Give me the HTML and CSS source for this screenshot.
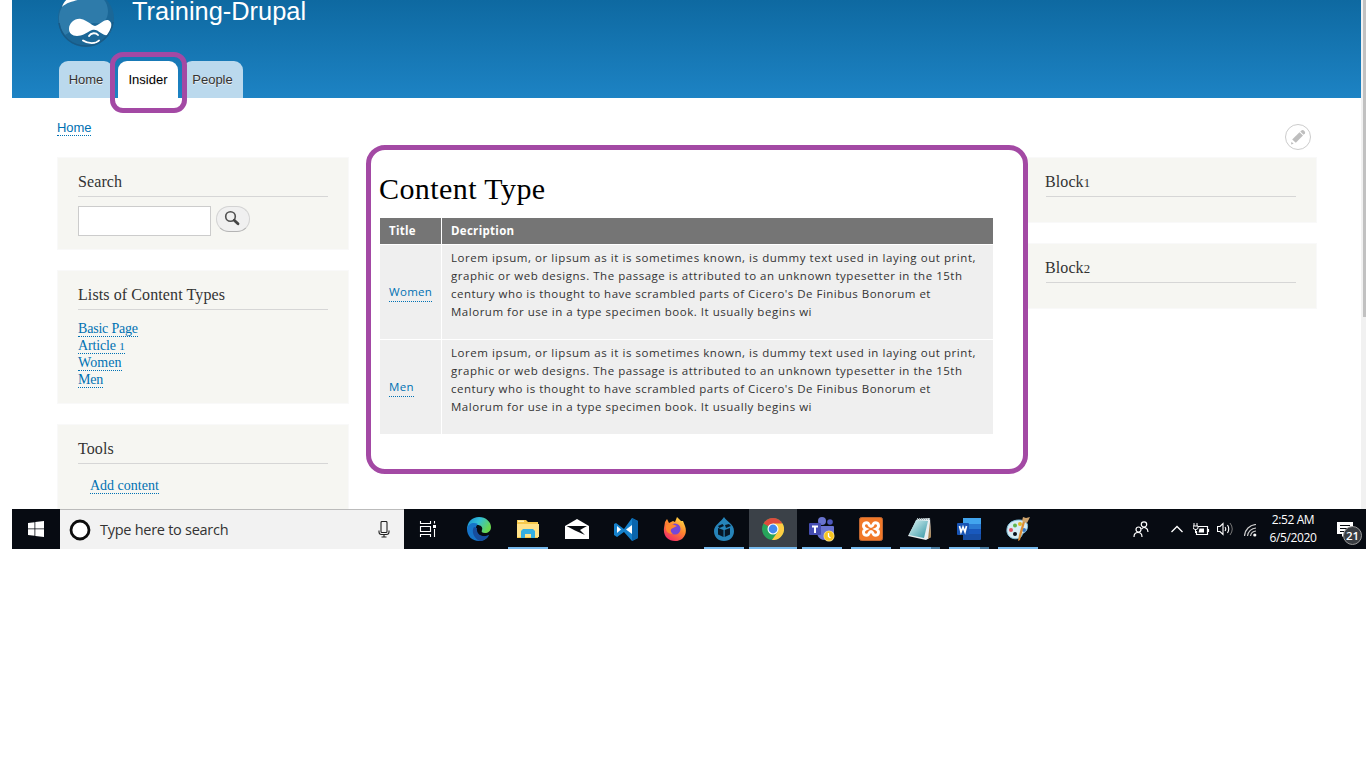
FILE: index.html
```html
<!DOCTYPE html>
<html lang="en">
<head>
<meta charset="utf-8">
<title>Content Type | Training-Drupal</title>
<link rel="stylesheet" href="styles.css">
</head>
<body>
<div class="screen">
  <div class="viewport">
    <div class="page">
      <header class="header">
        <div class="brand">
          <svg class="logo" viewBox="0 0 58 66" width="58" height="66">
            <path d="M27 0C31 7 38 9 45 15C53 21 57 29 57 37C57 53 45 66 29 66C13 66 1 53 1 37C1 28 6 20 13 16C20 11 25 7 27 0Z" fill="#1b6797"/>
            <path d="M20 12C35 11 50 13 51 30C51 42 43 43 37 42C26 42 14 51 8 54C2 46 0 37 4 28C8 21 13 17 20 12Z" fill="#2e7baa"/>
            <path d="M5 26C7 19 13 15 22 13L24 18C18 20 10 21 5 26Z" fill="#fff"/>
            <path d="M12 48C12 42 18 37 24 38C30 39 34 44 38 45C42 44 47 38 51 39C56 41 55 48 53 51C51 56 47 54 44 52C40 49 38 48 35 49C29 52 25 55 20 55C15 55 12 52 12 48Z" fill="#fff"/>
            <path d="M32 55C34 51.500 39 51.500 41 54M26 59.500C31 63 39 63 42 59.500" fill="none" stroke="#fff" stroke-width="1.900" stroke-linecap="round"/>
            <path d="M2 42C4 56 15 65 29 65C43 65 54 55 56 41" fill="none" stroke="#185a86" stroke-width="1.5"/>
          </svg>
          <div class="site-name">Training-Drupal</div>
        </div>
        <nav class="tabs">
          <a class="tab tab-home">Home</a>
          <a class="tab active">Insider<span class="mark mark-tab"></span></a>
          <a class="tab tab-people">People</a>
        </nav>
      </header>
      <div class="crumbs">
        <a class="link crumb">Home</a>
        <span class="edit"><svg width="26" height="26" viewBox="0 0 26 26"><circle cx="13" cy="13" r="12.5" fill="#fff" stroke="#ccc"/><g fill="#bebebe"><path d="M7.200 15.500L14.500 8.300L18 11.500L10.800 18.800Z"/><path d="M15.300 7.500L16.800 6.200Q18 5.600 19.400 7Q20.600 8.400 19.900 9.400L18.600 10.800Z"/><path d="M6 20.400L6.500 17.800L8.600 19.800Z"/></g></svg></span>
      </div>
      <div class="columns">
        <aside class="side">
          <section class="block search-block">
            <h2 class="bt">Search</h2>
            <div class="search-row">
              <input class="search-input" type="text" aria-label="Search">
              <button class="search-btn" aria-label="Search"><svg width="18" height="18" viewBox="0 0 18 18"><circle cx="6.500" cy="6.500" r="4.800" fill="none" stroke="#505050" stroke-width="1.600"/><path d="M10.200 10.200L14 13.800" stroke="#444" stroke-width="2.800" stroke-linecap="round"/></svg></button>
            </div>
          </section>
          <section class="block list-block">
            <h2 class="bt">Lists of Content Types</h2>
            <ul class="list">
              <li><a class="link w-basic">Basic Page</a></li>
              <li><a class="link w-article">Article <span class="old">1</span></a></li>
              <li><a class="link w-women">Women</a></li>
              <li><a class="link w-men">Men</a></li>
            </ul>
          </section>
          <section class="block tools-block">
            <h2 class="bt">Tools</h2>
            <div class="tools"><a class="link">Add content</a></div>
          </section>
        </aside>
        <main class="content">
          <span class="mark mark-main"></span>
          <h1 class="title">Content Type</h1>
          <table class="grid">
            <thead><tr><th class="c1">Title</th><th>Decription</th></tr></thead>
            <tbody>
              <tr><td><a class="link">Women</a></td><td class="desc"><div class="l1">Lorem ipsum, or lipsum as it is sometimes known, is dummy text used in laying out print,</div><div class="l2">graphic or web designs. The passage is attributed to an unknown typesetter in the 15th</div><div class="l3">century who is thought to have scrambled parts of Cicero's De Finibus Bonorum et</div><div class="l4">Malorum for use in a type specimen book. It usually begins wi</div></td></tr>
              <tr><td><a class="link">Men</a></td><td class="desc"><div class="l1">Lorem ipsum, or lipsum as it is sometimes known, is dummy text used in laying out print,</div><div class="l2">graphic or web designs. The passage is attributed to an unknown typesetter in the 15th</div><div class="l3">century who is thought to have scrambled parts of Cicero's De Finibus Bonorum et</div><div class="l4">Malorum for use in a type specimen book. It usually begins wi</div></td></tr>
            </tbody>
          </table>
        </main>
        <aside class="side right">
          <section class="block small-block"><h2 class="bt">Block<span class="old">1</span></h2></section>
          <section class="block small-block"><h2 class="bt">Block<span class="old">2</span></h2></section>
        </aside>
      </div>
    </div>
    <div class="scrollbar"><div class="thumb"></div></div>
  </div>
  <footer class="taskbar">
    <div class="start"><svg width="16" height="16" viewBox="0 0 16 16"><path fill="#fff" d="M0 2L6.500 1.200V7.400H0ZM7.300 1L16 0V7.400H7.300ZM0 8.300H6.500V14.700L0 13.900ZM7.300 8.300H16V16L7.300 14.900Z"/></svg></div>
    <div class="tsearch">
      <svg width="22" height="22" viewBox="0 0 22 22"><circle cx="11" cy="11" r="9" fill="#fff" stroke="#0c0c0c" stroke-width="2.800"/></svg>
      <span class="ttext">Type here to search</span>
      <svg class="mic" width="12" height="17" viewBox="0 0 12 17"><path d="M3 1.500Q3 .5 4 .5H8Q9 .5 9 1.500V10.500Q9 11.500 8 11.500H4Q3 11.500 3 10.500ZM1 9.500V11Q1 13.500 3.500 13.500H8.500Q11 13.500 11 11V9.500M6 13.500V16M3.500 16H8.500" fill="none" stroke="#222" stroke-width="1.100"/></svg>
    </div>
    <div class="taskview"><svg width="18" height="16" viewBox="0 0 18 16"><path d="M1.500 0V2.500H11.500V0M1.500 16V13.500H11.500V16M1.500 5.500H11.500V10.500H1.500ZM15.500 0V2.500M15.500 8V16" fill="none" stroke="#fff" stroke-width="1.100"/><path d="M14 4H17V7H14Z" fill="#fff"/></svg></div>
    <div class="apps">
      <div class="app"><svg width="24" height="24" viewBox="0 0 24 24"><defs><linearGradient id="eg" x1="0" y1="0" x2="1" y2=".45"><stop offset="0" stop-color="#168bd2"/><stop offset=".5" stop-color="#32bfd8"/><stop offset="1" stop-color="#68d751"/></linearGradient></defs><path d="M0 13C0 5 5 0 12 0C19 0 24 5 24 10C24 14 21 16 18 16C15 16 14 15 15 13C17 8 8 5 0 13Z" fill="url(#eg)"/><path d="M0 12C1 6 7 5 11 7C8 9 8 15 12 18C15 20 19 20 22 18C20 22 16 24 12 24C5 24 0 19 0 12Z" fill="#1674c8"/><path d="M7 10C4 14 7 22 13 24C17 24 20 21 22 18C16 21 9 18 10 11Z" fill="#174d9d"/></svg></div>
      <div class="app run"><svg width="22" height="20" viewBox="0 0 22 20"><path d="M0 1H9L11 3H21V19H0Z" fill="#f6c84b"/><path d="M0 5H22V18H0Z" fill="#ffe28a"/><path d="M1 1.500H7V3H1Z" fill="#fff0af"/><path d="M4 19V12L6 10H16L18 12V19H14V15H8V19Z" fill="#35aee2"/></svg></div>
      <div class="app"><svg width="24" height="20" viewBox="0 0 24 20"><path d="M0 7L12 0L24 7V20H0Z" fill="#fff"/><path d="M1.500 7H22L15 11L20 16L10 11.500Z" fill="#070b10"/></svg></div>
      <div class="app"><svg width="24" height="23" viewBox="0 0 24 23"><path d="M0 6L2 5L10 11L18 0L24 3V20L18 23L10 14L3 19L0 17Z" fill="#1681cb"/><path d="M3 8V15L7 11.500Z" fill="#fff"/><path d="M18 0L24 3V20L18 23Z" fill="#0a65ac"/><path d="M12 11.500L18 7V16Z" fill="#fff"/></svg></div>
      <div class="app"><svg width="24" height="24" viewBox="0 0 24 24"><defs><linearGradient id="fg" x1=".8" y1="0" x2=".2" y2="1"><stop offset="0" stop-color="#ffe047"/><stop offset=".45" stop-color="#ff852e"/><stop offset="1" stop-color="#f1246a"/></linearGradient></defs><path d="M2 5L4 2L6 6L10 4L12 5L14 0L18 4L20 4L22 9C25 17 20 24 12 24C5 24 0 19 1 11Z" fill="url(#fg)"/><circle cx="12" cy="12" r="5.500" fill="#7547d8"/><path d="M3 8L9 7L14 9L10 11C7 12 7 15 10 17C4 17 2 13 3 8Z" fill="#ff872e"/></svg></div>
      <div class="app run"><svg width="20" height="24" viewBox="0 0 20 24"><path d="M10 0C13 5 20 7 20 14C20 20 16 24 10 24C4 24 0 20 0 14C0 8 7 5 10 0Z" fill="#2684b9"/><path d="M4 11L9.500 13V20L4 17.500ZM10.700 13L16 11V17.500L10.700 20ZM4 9L8.500 7L10 9L5.500 11ZM11 8L15 7L17 9L12 11Z" fill="#071725"/></svg></div>
      <div class="app run current"><svg width="22" height="22" viewBox="0 0 22 22"><circle cx="11" cy="11" r="11" fill="#27a45b"/><path d="M11 11L1.500 5.500A11 11 0 0 1 20.500 5.500Z" fill="#df4b3d"/><path d="M11 5.500H20.500A11 11 0 0 1 10 22L15.800 13.800Z" fill="#fdcc43"/><circle cx="11" cy="11" r="5.500" fill="#fff"/><circle cx="11" cy="11" r="4.400" fill="#4389ee"/></svg></div>
      <div class="app run"><svg width="26" height="26" viewBox="0 0 26 26"><circle cx="13" cy="5" r="4" fill="#6973ce"/><circle cx="21" cy="6" r="2.800" fill="#4f59bd"/><path d="M8 10H24Q25 10 25 11V18Q22 24 16 24Q10 24 8 18Z" fill="#6a73d1"/><rect y="7" width="12" height="12" rx="1" fill="#454db2"/><path d="M3 9.500H9V11.500H7V17H5V11.500H3Z" fill="#fff"/><circle cx="20" cy="20" r="5.500" fill="#f9df86"/><circle cx="20" cy="20" r="4.700" fill="#f8c51f"/><path d="M19.500 17V20.500L21.500 22" stroke="#fff" stroke-width="1.300" fill="none"/></svg></div>
      <div class="app run"><svg width="24" height="24" viewBox="0 0 24 24"><rect x=".5" y=".5" width="23" height="23" rx="2" fill="#f17929" stroke="#bd6530"/><path d="M8 5.700C3.500 5.700 3.500 10.500 7 12C3.500 13.500 3.500 18.300 8 18.300C10.500 18.300 9.500 14.500 12 14.500C14.500 14.500 13.500 18.300 16 18.300C20.500 18.300 20.500 13.500 17 12C20.500 10.500 20.500 5.700 16 5.700C13.500 5.700 14.500 9.500 12 9.500C9.500 9.500 10.500 5.700 8 5.700Z" fill="none" stroke="#fff" stroke-width="2.900"/></svg></div>
      <div class="app run multi"><svg width="24" height="24" viewBox="0 0 24 24"><defs><linearGradient id="ng" x1="0" y1="0" x2="1" y2="1"><stop stop-color="#dff7f7"/><stop offset="1" stop-color="#3495a4"/></linearGradient></defs><path d="M9 2L22 1L23 20L18 23L0 19Z" fill="#e9eef0"/><path d="M22 5L23 20L20 22Z" fill="#a88251"/><path d="M8 3L20 4L16 21L1 18Z" fill="url(#ng)"/><path d="M9 2H22" stroke="#9eb0b5" stroke-width="2" stroke-dasharray="1 1"/></svg></div>
      <div class="app run multi"><svg width="24" height="22" viewBox="0 0 24 22"><path d="M6 0H23Q24 0 24 1V21Q24 22 23 22H6Z" fill="#174ea5"/><path d="M6 0H24V6H6Z" fill="#42a5ee"/><path d="M6 6H24V11H6Z" fill="#2b7bd3"/><path d="M6 11H24V16H6Z" fill="#1959bd"/><rect y="5" width="12" height="12" rx="1" fill="#1854b4"/><path d="M2.500 8L4 14L6 9L8 14L9.500 8" fill="none" stroke="#fff" stroke-width="1.700"/></svg></div>
      <div class="app run"><svg width="26" height="26" viewBox="0 0 26 26"><path d="M2 16C1 9 6 4 14 4C21 4 24 8 22 13C21 17 18 16 17 19C16 24 4 25 2 16Z" fill="#d7ecf5" stroke="#7ebdd8"/><circle cx="6" cy="14" r="2" fill="#df5360"/><circle cx="10" cy="9.500" r="2" fill="#60b34b"/><circle cx="15" cy="8" r="2" fill="#e4b82b"/><circle cx="10" cy="18" r="2" fill="#06101b"/><circle cx="19" cy="14" r="2" fill="#3a79c5"/><path d="M20 6L15 24L13 25L14 19L18 5Z" fill="#db8c35"/><path d="M17 5L18 1L21 2L25 1L22 7Z" fill="#cfa46d"/></svg></div>
    </div>
    <div class="tray">
      <svg class="people" width="16" height="17" viewBox="0 0 16 17"><g fill="none" stroke="#fff" stroke-width="1.200"><circle cx="5.500" cy="8.500" r="2.500"/><path d="M1 16C1 10 9 10 9 16"/><circle cx="11" cy="3.500" r="2.700"/><path d="M8.500 8C11 5 15 7 15 11"/></g></svg>
      <svg class="chev" width="12" height="8" viewBox="0 0 12 8"><path d="M.5 7L6 1.500L11.500 7" fill="none" stroke="#fff" stroke-width="1.300"/></svg>
      <svg class="battery" width="17" height="13" viewBox="0 0 17 13"><path d="M5 3.500H14.500V11.500H3.500V8M15.500 6V9" fill="none" stroke="#fff" stroke-width="1.200"/><path d="M6.500 5.500H11V9.500H5.500Z" fill="#fff"/><path d="M1 0V3M4 0V3M0 3H5V5Q5 6.500 2.500 6.500Q0 6.500 0 4ZM2.500 6V10" fill="none" stroke="#fff"/></svg>
      <svg class="volume" width="17" height="14" viewBox="0 0 17 14"><path d="M.5 4.500H3L6 1.500V12.500L3 9.500H.5Z M8 5Q9.500 7 8 9M10.500 3Q13 7 10.500 11" fill="none" stroke="#fff" stroke-width="1.100"/><path d="M13 1Q17.500 7 13 13" fill="none" stroke="#777"/></svg>
      <svg class="wifi" width="13" height="13" viewBox="0 0 13 13"><path d="M.5 12A12 12 0 0 1 12 .5M3.500 12A9 9 0 0 1 12 4M6.500 12A6 6 0 0 1 12 7" fill="none" stroke="#ccc" stroke-width="1.200"/><circle cx="10.800" cy="11" r="1.600" fill="#fff"/></svg>
      <div class="clock"><div class="time">2:52 AM</div><div class="date">6/5/2020</div></div>
      <div class="notif"><svg width="16" height="15" viewBox="0 0 16 15"><path d="M0 0H16V12H8L5 15V12H0Z" fill="#fff"/><path d="M3 3.500H13M3 6.500H13M3 9.500H10" stroke="#080c12"/></svg><span class="badge">21</span></div>
    </div>
  </footer>
</div>
</body>
</html>
```
FILE: styles.css
```css
* { box-sizing: border-box; }
body { margin: 0; width: 1366px; height: 768px; overflow: hidden; background: #fff; font-family: "Liberation Sans", sans-serif; color: #333; }
h1, h2, ul { margin: 0; padding: 0; font-weight: normal; list-style: none; }
svg { display: block; flex: none; }
.screen { padding-left: 12px; }
.viewport { display: flex; height: 509px; overflow: hidden; }
.page { width: 1349px; flex: none; }
.scrollbar { width: 5px; height: 509px; background: #f1f1f1; padding-left: 2px; }
.thumb { height: 317px; background: #c1c1c1; }
.header { height: 98px; background: linear-gradient(#0e69a1, #1d83c4); display: flex; flex-direction: column; justify-content: space-between; }
.brand { display: flex; height: 47px; align-items: flex-end; padding-left: 45px; gap: 17px; }
.site-name { color: #fff; font-size: 25.4px; line-height: 22px; margin-bottom: 25px; white-space: nowrap; }
.tabs { display: flex; height: 37px; padding-left: 47px; }
.tab { position: relative; width: 54px; border-radius: 9px 9px 0 0; background: #bbd9ed; color: #333; font-size: 13px; line-height: 37px; text-align: center; text-shadow: 0 1px 0 #eee; }
.tab.active { background: #fff; color: #000; width: 60px; margin-left: 5px; }
.tab-people { width: 60px; margin-left: 5px; padding-right: 1px; }
.mark { position: absolute; border: 5px solid #a349a4; pointer-events: none; z-index: 3; }
.mark-tab { left: -8px; top: -9px; width: 77px; height: 61px; border-radius: 13px; }
.mark-main { left: -13px; top: -12px; width: 662px; height: 329px; border-radius: 19px; }
.link { color: #0071b3; border-bottom: 1px dotted #0071b3; }
.crumbs { height: 59px; display: flex; justify-content: space-between; padding: 22px 50px 0 45px; font-size: 13px; }
.crumb { height: 16px; line-height: 16px; letter-spacing: -0.1px; }
.edit { margin-top: 4px; }
.columns { display: flex; padding-left: 45px; }
.side { width: 292px; display: flex; flex-direction: column; gap: 20px; }
.block { background: #f6f6f2; border: 1px solid #f9f9f9; padding: 14px 20px 0; font-family: "Liberation Serif", serif; }
.search-block { height: 93px; }
.list-block { height: 134px; }
.tools-block { height: 110px; }
.small-block { height: 66px; }
.right .bt { text-indent: -1px; }
.bt { font-size: 16px; line-height: 19px; height: 25px; border-bottom: 1px solid #d6d6d6; color: #333; letter-spacing: 0.1px; }
.old { font-size: 0.8em; }
.search-row { display: flex; gap: 5px; margin-top: 9px; }
.search-input { width: 133px; height: 30px; border: 1px solid #ccc; background: #fff; padding: 0; }
.search-btn { width: 34px; height: 26px; border: 1px solid #d3d3d3; border-bottom-color: #b4b4b4; border-radius: 13px; background: #f0f0f0; padding: 3px 7px; }
.list { padding-top: 12px; font-size: 14px; line-height: 17px; }
.list li { height: 17px; }
.list .link, .tools .link { display: inline-block; height: 15px; line-height: 14px; vertical-align: top; white-space: nowrap; }
.w-basic { letter-spacing: -0.2px; }
.w-article { letter-spacing: -0.15px; }
.w-women { letter-spacing: 0.1px; }
.w-men { letter-spacing: -0.15px; }
.tools { font-size: 14px; padding: 15px 0 0 12px; }
.content { position: relative; width: 614px; margin: 0 32px 0 30px; flex: none; }
.title { color: #000; font-family: "Liberation Serif", serif; font-size: 30px; line-height: 36px; height: 61px; padding-top: 14px; letter-spacing: 0.42px; }
.grid { width: 613px; margin-left: 1px; border-collapse: separate; border-spacing: 0; table-layout: fixed; font-family: "Open Sans", sans-serif; font-size: 11.5px; color: #333; }
.grid th { background: #757575; color: #fff; text-align: left; height: 26px; padding: 0 9px 1px; font-weight: 700; border-left: 1px solid #fff; letter-spacing: 0.3px; }
.grid .c1 { width: 61px; }
.grid th:first-child, .grid td:first-child { border-left: 0; }
.grid td { background: #efefef; border-top: 1px solid #fff; border-left: 1px solid #fff; height: 95px; padding: 0 9px; }
.grid td .link { display: inline-block; height: 19px; line-height: 17px; letter-spacing: 0.3px; position: relative; top: -1px; margin-top: 2px; }
.grid .desc { vertical-align: top; }
.desc div { height: 18px; line-height: 18px; white-space: nowrap; }
.grid .l1 { margin-top: 4px; letter-spacing: 0.56px; }
.l2 { letter-spacing: 0.53px; }
.l3 { letter-spacing: 0.49px; }
.l4 { letter-spacing: 0.52px; }
.taskbar { display: flex; height: 40px; background: #070b12; color: #fff; font-family: "Open Sans", sans-serif; }
.start { width: 48px; display: grid; place-items: center; flex: none; }
.tsearch { width: 344px; background: #f2f2f2; border-top: 1px solid #bbb; display: flex; align-items: center; padding: 0 14px 0 9px; color: #333; flex: none; }
.ttext { font-size: 14.5px; margin-left: 9px; flex: 1; letter-spacing: -0.27px; }
.taskview { width: 51px; padding: 12px 0 0 15px; flex: none; }
.apps { display: flex; gap: 1px; flex: none; }
.app { width: 48px; height: 40px; display: grid; place-items: center; position: relative; }
.run::after { content: ""; position: absolute; left: 4px; bottom: 0; width: 40px; height: 2px; background: #76b9ed; }
.current { background: #3b4148; }
.current::after { left: 0; width: 48px; }
.multi::after { background: linear-gradient(90deg, #76b9ed 31px, #47799d 31px); }
.tray { display: flex; align-items: center; padding-left: 91px; flex: 1; }
.chev { margin-left: 22px; }
.battery { margin-left: 10px; }
.volume { margin-left: 7px; }
.wifi { margin: 3px 0 0 10px; }
.clock { width: 60px; margin-left: 6px; text-align: center; font-size: 12px; line-height: 18px; letter-spacing: -0.4px; white-space: nowrap; }
.notif { position: relative; margin-left: 14px; }
.badge { position: absolute; left: 6px; top: 4px; width: 19px; height: 19px; border: 1px solid #999; border-radius: 50%; background: #393d42; text-align: center; font-size: 11.5px; line-height: 17px; font-weight: 600; }
```
